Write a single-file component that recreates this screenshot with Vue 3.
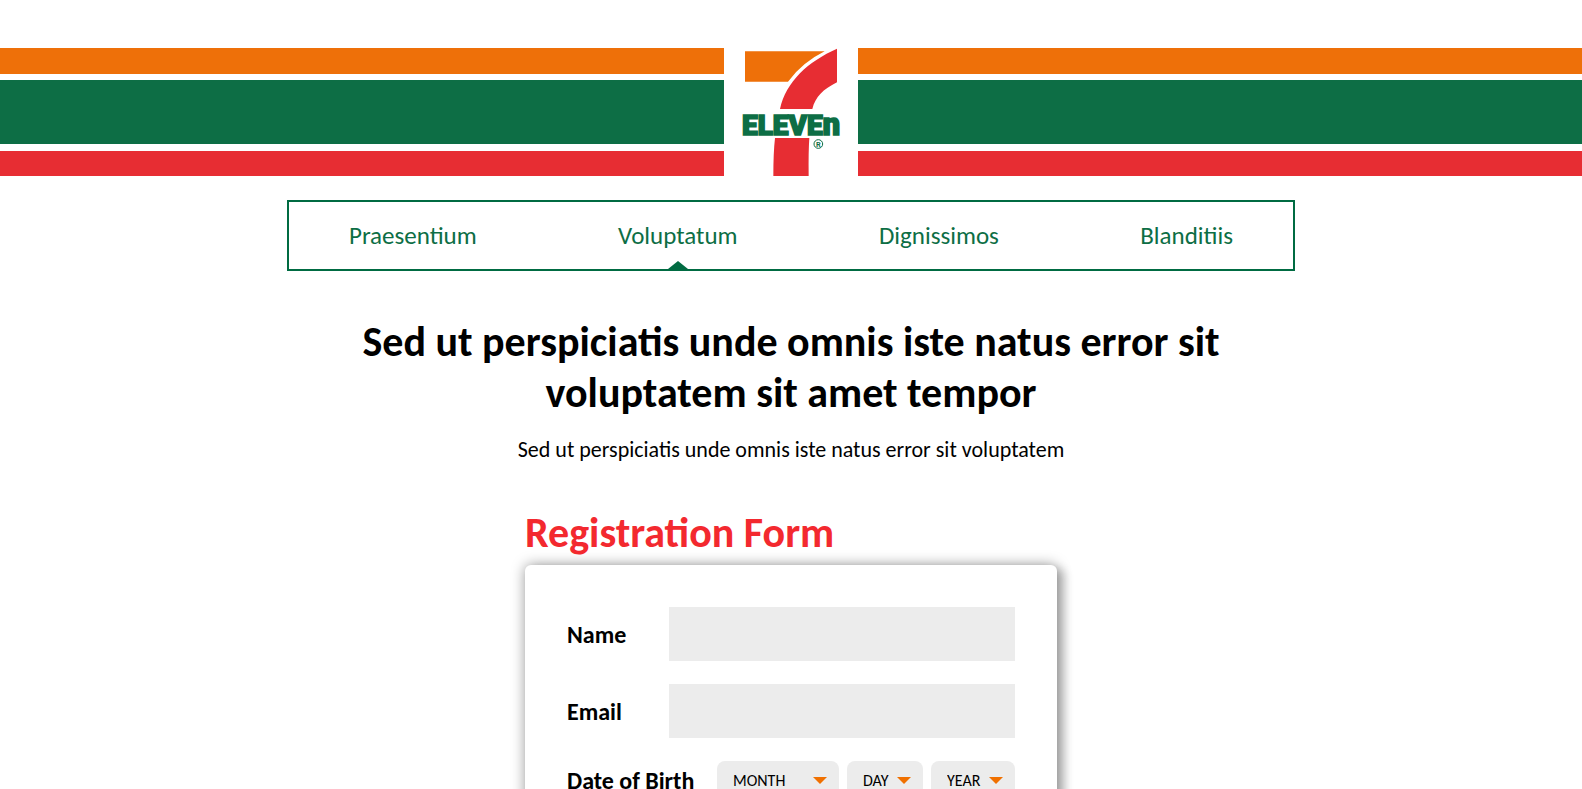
<script setup>
import { ref } from 'vue'

const links = ['Praesentium', 'Voluptatum', 'Dignissimos', 'Blanditiis']
const active = ref('Voluptatum')

const fields = [
  { id: 'name', label: 'Name', type: 'text' },
  { id: 'email', label: 'Email', type: 'email' },
]

const birthParts = [
  { id: 'month', label: 'MONTH' },
  { id: 'day', label: 'DAY' },
  { id: 'year', label: 'YEAR' },
]
</script>

<template>
  <div class="page">
    <header class="banner">
      <div class="stripes"><i class="orange"></i><i class="green"></i><i class="red"></i></div>
      <a class="logo" href="#" aria-label="7-Eleven">
        <svg viewBox="27 39 402 384" width="134" height="128">
          <path d="M90 49H329Q262 82 219 140H90Z" fill="#ee7009" />
          <path d="M366 41V142C324 163 301 186 292 222H195C213 139 280 79 366 41Z" fill="#e72d33" />
          <path d="M180 309H283Q280 350 281 423H175Q175 353 180 309Z" fill="#e72d33" />
          <text class="wordmark" x="81" y="299">ELEVE<tspan class="wordmark-n">n</tspan></text>
          <circle cx="310" cy="327" r="13" fill="none" stroke="#0d6e45" stroke-width="3" />
          <text class="mark" x="310" y="335" text-anchor="middle">R</text>
        </svg>
      </a>
      <div class="stripes"><i class="orange"></i><i class="green"></i><i class="red"></i></div>
    </header>

    <nav class="menu">
      <a
        v-for="link in links"
        :key="link"
        href="#"
        :class="{ active: link === active }"
        @click.prevent="active = link"
      >{{ link }}</a>
    </nav>

    <main>
      <h1>Sed ut perspiciatis unde omnis iste natus error sit voluptatem sit amet tempor</h1>
      <p class="lead">Sed ut perspiciatis unde omnis iste natus error sit voluptatem</p>

      <section class="registration">
        <h2>Registration Form</h2>
        <form class="card" @submit.prevent>
          <div v-for="field in fields" :key="field.id" class="row">
            <label :for="field.id">{{ field.label }}</label>
            <input :id="field.id" :type="field.type" />
          </div>
          <div class="row birth">
            <label for="month">Date of Birth</label>
            <div class="selects">
              <div v-for="part in birthParts" :key="part.id" class="select" :class="part.id">
                <select :id="part.id" :aria-label="part.label">
                  <option>{{ part.label }}</option>
                </select>
              </div>
            </div>
          </div>
        </form>
      </section>
    </main>
  </div>
</template>

<style>
body {
  background: #fff;
}
</style>

<style scoped>
.page {
  box-sizing: border-box;
  height: 100vh;
  overflow: hidden;
  padding-top: 48px;
  font-family: Calibri, Carlito, Lato, sans-serif;
  color: #000;
}
.banner {
  display: flex;
}
.stripes {
  flex: 1;
  display: flex;
  flex-direction: column;
}
.orange {
  height: 26px;
  background: #ee7009;
}
.green {
  height: 64px;
  margin: 6px 0 7px;
  background: #0d6e45;
}
.red {
  height: 25px;
  background: #e72d33;
}
.logo,
.logo svg {
  display: block;
}
.wordmark {
  font: 900 84px Roboto, sans-serif;
  fill: #0d6e45;
  stroke: #0d6e45;
  stroke-width: 5px;
}
.wordmark-n {
  font-size: 92px;
}
.mark {
  font: 700 22px Roboto, sans-serif;
  fill: #0d6e45;
}
.menu {
  box-sizing: border-box;
  display: flex;
  justify-content: space-between;
  max-width: 1008px;
  margin: 24px auto 0;
  padding: 0 60px;
  border: 2px solid #006b42;
}
.menu a {
  position: relative;
  font-size: 25px;
  line-height: 67px;
  color: #0d6e45;
  text-decoration: none;
}
.menu .active::after {
  content: '';
  position: absolute;
  left: 50%;
  bottom: 0;
  margin-left: -10px;
  border: 10px solid transparent;
  border-top: 0;
  border-bottom: 8px solid #006b42;
}
h1 {
  max-width: 920px;
  margin: 45px auto 0;
  font-size: 42px;
  line-height: 51px;
  text-align: center;
}
.lead {
  margin: 20px 0 0;
  font-size: 22px;
  line-height: 24px;
  text-align: center;
}
.registration {
  max-width: 532px;
  margin: 45px auto 0;
}
h2 {
  margin: 0;
  font-size: 42px;
  line-height: 51px;
  color: #f3292f;
}
.card {
  margin-top: 7px;
  padding: 42px;
  border-radius: 6px;
  background: #fff;
  box-shadow: 0 0 14px rgba(0, 0, 0, 0.4), 8px 4px 10px rgba(0, 0, 0, 0.2);
}
.row {
  display: flex;
  align-items: center;
  justify-content: space-between;
  margin-bottom: 23px;
}
.row label {
  padding-top: 2px;
  font-size: 24px;
  line-height: 28px;
  font-weight: 700;
}
.birth label {
  padding-top: 0;
}
.row input {
  box-sizing: border-box;
  width: 346px;
  height: 54px;
  padding: 0 16px;
  border: 0;
  background: #ececec;
  font: inherit;
  font-size: 22px;
}
.selects {
  display: flex;
  gap: 8px;
}
.select {
  position: relative;
}
.select::after {
  content: '';
  position: absolute;
  top: 16px;
  right: 12px;
  border: 7px solid transparent;
  border-top-color: #f07000;
  border-bottom: 0;
  pointer-events: none;
}
.select select {
  appearance: none;
  display: block;
  width: 100%;
  height: 40px;
  padding: 0 16px 2px;
  border: 0;
  border-radius: 8px;
  background: #ececec;
  color: #000;
  font: inherit;
  font-size: 16px;
}
.month {
  width: 122px;
}
.day {
  width: 76px;
}
.year {
  width: 84px;
}
</style>
